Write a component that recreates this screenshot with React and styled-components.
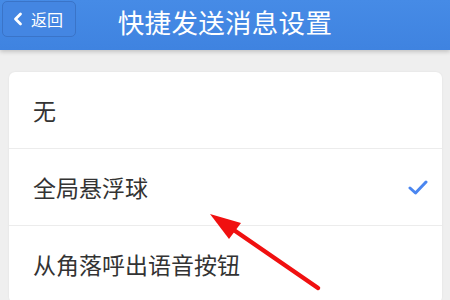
import React from "react";
import styled, { createGlobalStyle } from "styled-components";

const Global = createGlobalStyle`
  html, body { margin: 0; padding: 0; }
  body {
    width: 450px; height: 300px; overflow: hidden;
    background: #eeeeee;
    font-family: "Noto Sans CJK SC", "Noto Sans", sans-serif;
  }
`;

const Page = styled.div`
  position: relative;
  width: 450px;
  height: 300px;
  background: #efefef;
  overflow: hidden;
`;

const Header = styled.div`
  height: 50px;
  background: linear-gradient(#468be6, #3f83e0);
  box-shadow: 0 2px 4px rgba(0,0,0,0.18);
  display: flex;
  align-items: flex-start;
  position: relative;
`;

const BackButton = styled.div`
  margin: 1px 0 0 2px;
  width: 74px;
  height: 36px;
  box-sizing: border-box;
  border: 1px solid #3a74c8;
  border-radius: 5px;
  background: #4486e2;
  display: flex;
  align-items: center;
  gap: 8px;
  padding-left: 10px;
  color: #fff;
  font-size: 16px;
`;

const Title = styled.div`
  position: absolute;
  left: 0;
  right: 0;
  top: 4px;
  text-align: center;
  color: #fff;
  font-size: 26.5px;
  line-height: 36px;
  letter-spacing: 0.3px;
  pointer-events: none;
`;

const Body = styled.div`
  padding: 22px 8px 0 9px;
`;

const Card = styled.div`
  background: #fff;
  border-radius: 6px;
  box-shadow: 0 0 2px rgba(0,0,0,0.08);
  overflow: hidden;
`;

const Row = styled.div`
  height: 76px;
  display: flex;
  align-items: center;
  justify-content: space-between;
  padding: 0 14px 0 24px;
  border-bottom: 1px solid #ececec;
  color: #333;
  font-size: 23px;
`;

const Arrow = styled.svg`
  position: absolute;
  left: 0;
  top: 0;
  pointer-events: none;
`;

export default function App() {
  return (
    <Page>
      <Global />
      <Header>
        <BackButton>
          <svg width="10" height="14" viewBox="0 0 10 14">
            <path d="M7.5 2 L2.5 7 L7.5 12" fill="none" stroke="#fff" strokeWidth="2.8" strokeLinecap="round" strokeLinejoin="round" />
          </svg>
          <span>返回</span>
        </BackButton>
        <Title>快捷发送消息设置</Title>
      </Header>
      <Body>
        <Card>
          <Row>无</Row>
          <Row>
            <span>全局悬浮球</span>
            <svg width="20" height="15" viewBox="0 0 20 15">
              <path d="M2 8 L7.5 13 L18 2" fill="none" stroke="#4a86f0" strokeWidth="3" strokeLinecap="round" strokeLinejoin="round" />
            </svg>
          </Row>
          <Row>从角落呼出语音按钮</Row>
        </Card>
      </Body>
      <Arrow width="450" height="300" viewBox="0 0 450 300">
        <line x1="318" y1="288" x2="228" y2="226" stroke="#f01010" strokeWidth="4.5" strokeLinecap="round" />
        <polygon points="210,214 241,223 229,239" fill="#f01010" />
      </Arrow>
    </Page>
  );
}
